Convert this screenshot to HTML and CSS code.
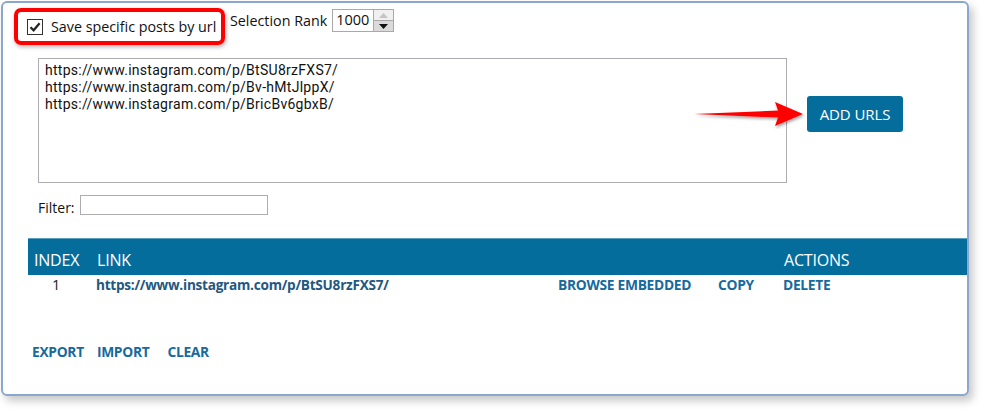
FILE: index.html
```html
<!DOCTYPE html>
<html>
<head>
<meta charset="utf-8">
<link rel="stylesheet" href="styles.css">
</head>
<body>
<div class="panel">
  <div class="toprow">
    <label class="highlight">
      <span class="check"><svg width="14" height="14" viewBox="0 0 14 14"><path d="M2.5 7.2 L5.6 10.3 L11.6 3.2" fill="none" stroke="#222" stroke-width="2.2"/></svg></span>
      <span class="checklabel">Save specific posts by url</span>
    </label>
    <span class="ranklabel">Selection Rank</span>
    <div class="spin">
      <span class="spinval">1000</span>
      <div class="spinbtns">
        <span class="sbtn up"><svg width="9" height="5" viewBox="0 0 9 5"><path d="M0 5 L4.5 0 L9 5Z" fill="#c4c4c4"/></svg></span>
        <span class="sbtn down"><svg width="9" height="5" viewBox="0 0 9 5"><path d="M0 0 L4.5 5 L9 0Z" fill="#111"/></svg></span>
      </div>
    </div>
  </div>

  <div class="urlrow">
    <div class="textarea">
      <div class="line">https://www.instagram.com/p/BtSU8rzFXS7/</div>
      <div class="line">https://www.instagram.com/p/Bv-hMtJlppX/</div>
      <div class="line">https://www.instagram.com/p/BricBv6gbxB/</div>
    </div>
    <div class="btnwrap">
      <svg class="arrow" width="118" height="30" viewBox="0 0 118 30">
        <defs><filter id="sh" x="-10%" y="-30%" width="130%" height="180%"><feDropShadow dx="1" dy="2" stdDeviation="1.5" flood-color="#000" flood-opacity="0.35"/></filter></defs>
        <path d="M1 15 L85 11.5 L82 3 L110 15 L82 27 L85 18.5 Z" fill="#ff0000" filter="url(#sh)"/>
      </svg>
      <button class="addbtn">ADD URLS</button>
    </div>
  </div>

  <div class="filterrow">
    <span class="filterlabel">Filter:</span>
    <span class="filterinput"></span>
  </div>

  <div class="table">
    <div class="thead">
      <span class="h1">INDEX</span>
      <span class="h2">LINK</span>
      <span></span>
      <span></span>
      <span class="h5">ACTIONS</span>
    </div>
    <div class="trow">
      <span class="c1">1</span>
      <span class="c2">https://www.instagram.com/p/BtSU8rzFXS7/</span>
      <span class="act">BROWSE EMBEDDED</span>
      <span class="act">COPY</span>
      <span class="act">DELETE</span>
    </div>
  </div>

  <div class="footer">
    <span class="act f1">EXPORT</span>
    <span class="act f2">IMPORT</span>
    <span class="act f3">CLEAR</span>
  </div>
</div>
</body>
</html>
```
FILE: styles.css
```css
html, body {
  margin: 0;
  padding: 0;
  background: #ffffff;
}
body {
  font-family: "Open Sans", "Noto Sans", sans-serif;
  color: #1a1a1a;
  width: 985px;
  height: 412px;
  overflow: hidden;
}
.panel {
  margin: 1px 0 0 1px;
  width: 964px;
  height: 391px;
  border: 2px solid #8ba7cf;
  border-radius: 6px;
  background: #fff;
  box-shadow: 4px 5px 8px rgba(0,0,0,0.22);
  position: relative;
  box-sizing: content-box;
}
.toprow {
  display: flex;
  align-items: flex-start;
  padding: 5px 0 0 11px;
  height: 40px;
}
.highlight {
  box-sizing: border-box;
  width: 211px;
  height: 37px;
  border: 4px solid #ff0000;
  border-radius: 7px;
  display: flex;
  align-items: center;
  padding-left: 9px;
  box-shadow: 1px 2px 4px rgba(0,0,0,0.3);
}
.check {
  box-sizing: border-box;
  width: 16px;
  height: 16px;
  border: 1px solid #333;
  background: #fff;
  display: flex;
  align-items: center;
  justify-content: center;
}
.checklabel {
  font-size: 14.3px;
  margin-left: 8px;
  color: #111;
  white-space: nowrap;
}
.ranklabel {
  font-size: 14.3px;
  margin-left: 5px;
  margin-top: 3px;
  color: #111;
  white-space: nowrap;
}
.spin {
  display: flex;
  margin-left: 5px;
  margin-top: 1px;
}
.spinval {
  box-sizing: border-box;
  width: 41px;
  height: 23px;
  border: 1px solid #a9a9a9;
  border-right: none;
  font-size: 14.5px;
  padding-left: 3px;
  line-height: 20px;
  color: #111;
}
.spinbtns {
  display: flex;
  flex-direction: column;
  width: 21px;
  height: 23px;
  box-sizing: border-box;
  border: 1px solid #a9a9a9;
}
.sbtn {
  flex: 1;
  display: flex;
  align-items: center;
  justify-content: center;
}
.sbtn.up {
  background: #f0f0f0;
  border-bottom: 1px solid #a9a9a9;
}
.sbtn.down {
  background: #dadada;
}
.urlrow {
  display: flex;
  align-items: flex-start;
  padding: 10px 0 0 35px;
}
.textarea {
  box-sizing: border-box;
  width: 749px;
  height: 125px;
  border: 1px solid #abadb3;
  padding: 3px 6px;
  display: flex;
  flex-direction: column;
}
.line {
  font-family: Roboto, "Open Sans", sans-serif;
  font-size: 14px;
  letter-spacing: 0.28px;
  line-height: 17px;
  height: 17px;
  color: #111;
  white-space: nowrap;
}
.btnwrap {
  position: relative;
  margin-left: 20px;
  margin-top: 38px;
}
.arrow {
  position: absolute;
  left: -114px;
  top: 3px;
}
.addbtn {
  width: 96px;
  height: 36px;
  background: #056d9c;
  color: #fff;
  border: none;
  border-radius: 3px;
  font-family: "Open Sans", "Noto Sans", sans-serif;
  font-size: 15px;
  padding: 0;
  letter-spacing: -0.1px;
}
.filterrow {
  display: flex;
  align-items: center;
  padding: 12px 0 0 35px;
  height: 20px;
}
.filterlabel {
  font-size: 14px;
  margin-top: 5px;
  color: #111;
}
.filterinput {
  box-sizing: border-box;
  width: 188px;
  height: 20px;
  border: 1px solid #abadb3;
  margin-left: 5px;
}
.table {
  margin: 23px 0 0 25px;
}
.thead, .trow {
  display: grid;
  grid-template-columns: 62px 464px 160px 65px 1fr;
}
.thead {
  height: 37px;
  background: #056d9c;
  border-top: 1px solid #5d9fc0;
  box-sizing: border-box;
  color: #fff;
  font-size: 16px;
  align-items: center;
  padding-top: 5px;
  letter-spacing: -0.2px;
}
.h1 { padding-left: 6px; }
.h2 { padding-left: 7px; }
.h5 { padding-left: 5px; }
.trow {
  height: 18px;
  align-items: center;
}
.c1 {
  font-size: 14.5px;
  color: #222;
  padding-left: 24px;
}
.c2 {
  font-weight: 700;
  font-size: 13.6px;
  color: #22577f;
  padding-left: 6px;
  letter-spacing: -0.25px;
  white-space: nowrap;
}
.act {
  font-weight: 700;
  font-size: 13.8px;
  color: #166a9c;
  padding-left: 4px;
  letter-spacing: -0.3px;
  white-space: nowrap;
}
.footer {
  display: flex;
  padding: 49px 0 0 29px;
}
.footer .act { padding-left: 0; }
.f2 { margin-left: 13px; }
.f3 { margin-left: 18px; }
```
